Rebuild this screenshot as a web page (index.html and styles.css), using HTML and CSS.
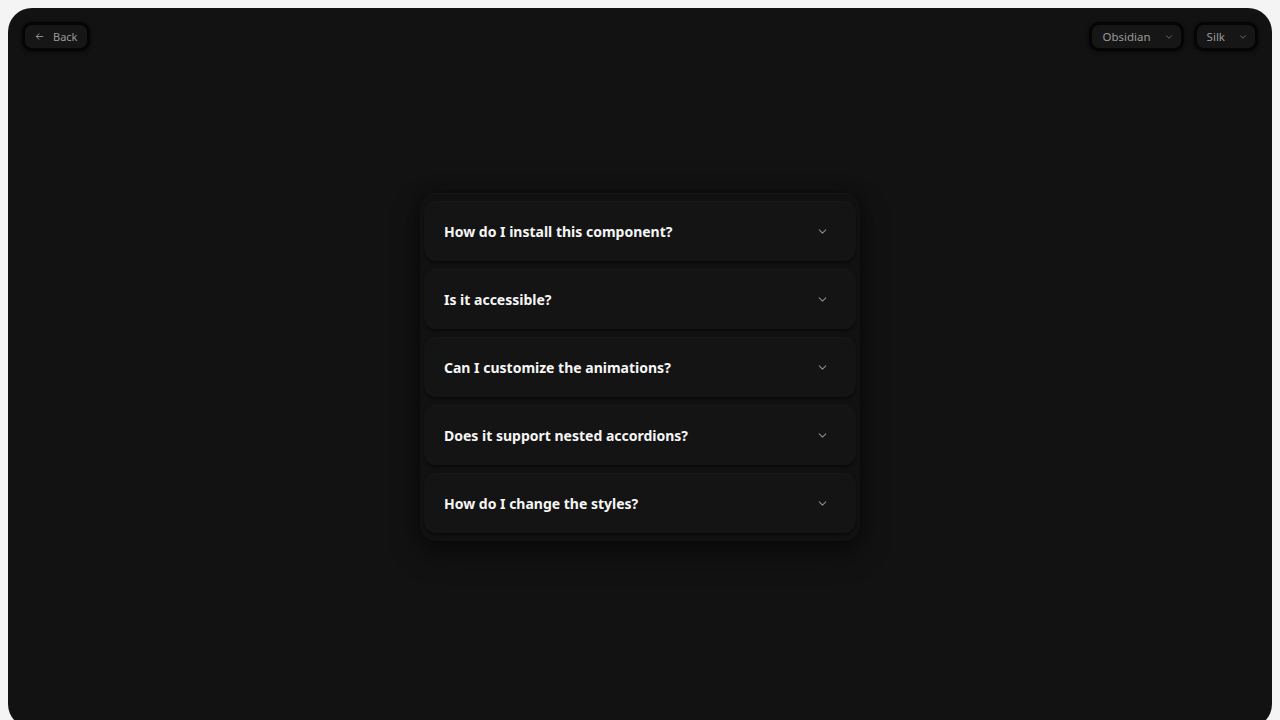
FILE: index.html
```html
<!DOCTYPE html>
<html lang="en">
<head>
  <meta charset="UTF-8">
  <meta name="viewport" content="width=device-width, initial-scale=1.0">
  <title>Accordion</title>
  <link rel="stylesheet" href="styles.css">
</head>
<body>
  <div class="stage">
    <!-- top bar: back link and theme pickers -->
    <header class="topbar">
      <button class="pill back">
        <svg viewBox="0 0 24 24" width="11" height="11"><path d="M19 12H5M11 6l-6 6 6 6" fill="none" stroke="currentColor" stroke-width="2" stroke-linecap="round" stroke-linejoin="round"/></svg>
        Back
      </button>
      <div class="pickers">
        <button class="pill select">Obsidian
          <svg viewBox="0 0 24 24" width="10" height="10"><path d="M6 9l6 6 6-6" fill="none" stroke="currentColor" stroke-width="2" stroke-linecap="round" stroke-linejoin="round"/></svg>
        </button>
        <button class="pill select">Silk
          <svg viewBox="0 0 24 24" width="10" height="10"><path d="M6 9l6 6 6-6" fill="none" stroke="currentColor" stroke-width="2" stroke-linecap="round" stroke-linejoin="round"/></svg>
        </button>
      </div>
    </header>

    <main class="center">
      <div class="accordion">
        <div class="item"><span>How do I install this component?</span><svg class="chev" viewBox="0 0 24 24" width="13" height="13"><path d="M6 9l6 6 6-6"/></svg></div>
        <div class="item"><span>Is it accessible?</span><svg class="chev" viewBox="0 0 24 24" width="13" height="13"><path d="M6 9l6 6 6-6"/></svg></div>
        <div class="item"><span>Can I customize the animations?</span><svg class="chev" viewBox="0 0 24 24" width="13" height="13"><path d="M6 9l6 6 6-6"/></svg></div>
        <div class="item"><span>Does it support nested accordions?</span><svg class="chev" viewBox="0 0 24 24" width="13" height="13"><path d="M6 9l6 6 6-6"/></svg></div>
        <div class="item"><span>How do I change the styles?</span><svg class="chev" viewBox="0 0 24 24" width="13" height="13"><path d="M6 9l6 6 6-6"/></svg></div>
      </div>
    </main>
  </div>
</body>
</html>
```

FILE: styles.css
```css
* { margin: 0; padding: 0; box-sizing: border-box; }
html, body { width: 100%; height: 100%; overflow: hidden; background: #f4f4f4; }

body {
  padding: 8px;
  font-family: "Noto Sans", "Open Sans", sans-serif;
}

/* dark rounded stage */
.stage {
  height: 720px;
  border-radius: 24px;
  background: #121212;
  padding: 14px 14px;
  display: flex;
  flex-direction: column;
}

.topbar {
  display: flex;
  justify-content: space-between;
  align-items: flex-start;
}
.pickers { display: flex; gap: 10px; }

.pill {
  display: flex;
  align-items: center;
  height: 29px;
  background: #161616;
  color: #9a9a9a;
  font-family: inherit;
  font-size: 11.5px;
  border: 3px solid #050505;
  border-radius: 10px;
  box-shadow: 0 1px 4px rgba(0,0,0,0.6);
  cursor: pointer;
}
.back { font-size: 11px; gap: 8px; padding: 0 10px 0 9px; }
.select { padding: 0 7px 0 10px; gap: 13px; }
.select svg { color: #777; }

/* accordion block */
.center {
  flex: 1;
  display: flex;
  justify-content: center;
  padding-top: 142px;
}
.accordion {
  width: 440px;
  height: 348px;
  padding: 8px 4px;
  border-radius: 16px;
  background: #111;
  box-shadow: inset 0 1px 0 rgba(255,255,255,0.025), 0 12px 30px rgba(0,0,0,0.45), 0 0 12px rgba(0,0,0,0.35);
  display: flex;
  flex-direction: column;
  gap: 8px;
}
.item {
  height: 60px;
  display: flex;
  align-items: center;
  justify-content: space-between;
  padding: 0 27px 0 20px;
  background: #141414;
  border-radius: 12px;
  box-shadow: 0 2px 2px #0a0a0a, inset 0 1px 0 rgba(255,255,255,0.02);
  color: #f6f6f6;
  font-size: 14px;
  font-weight: 700;
}
.chev {
  fill: none;
  stroke: #8a8a8a;
  stroke-width: 2;
  stroke-linecap: round;
  stroke-linejoin: round;
}
```
